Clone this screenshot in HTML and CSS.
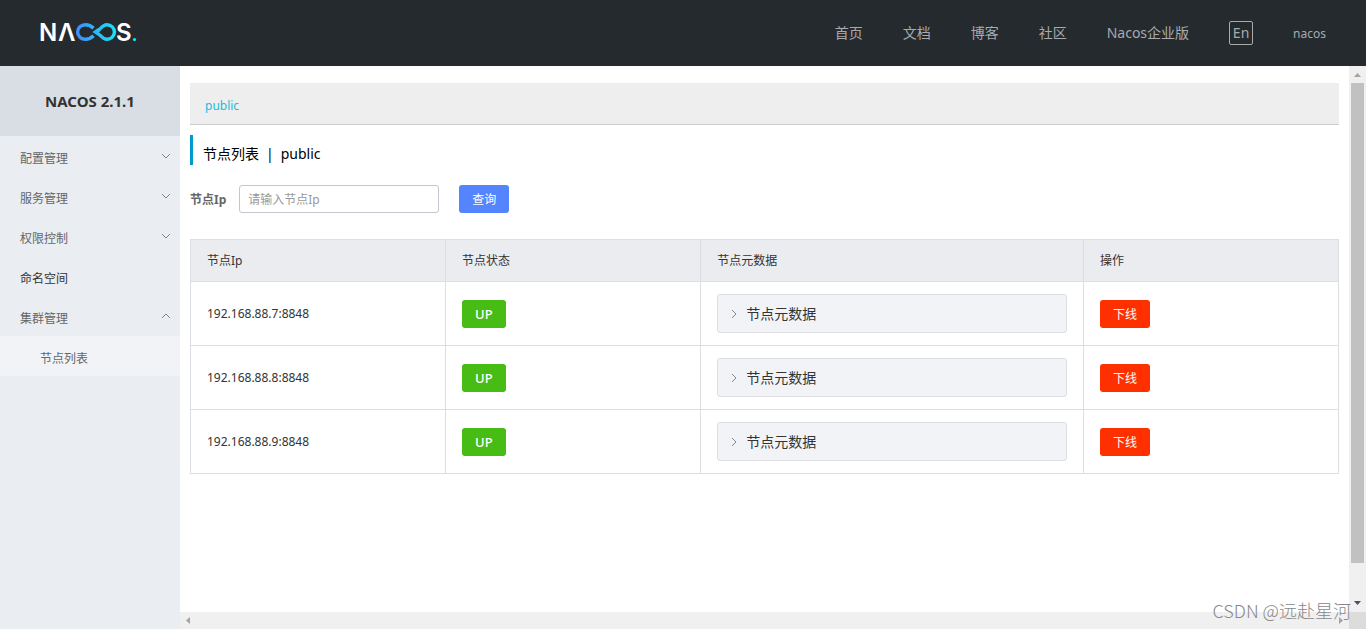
FILE: index.html
```html
<!DOCTYPE html>
<html lang="zh-CN">
<head>
<meta charset="utf-8">
<title>Nacos</title>
<link rel="stylesheet" href="styles.css">
</head>
<body>
<header class="topbar">
  <a class="logo" href="#" aria-label="Nacos">
    <svg width="100" height="36" viewBox="0 -5 100 36">
      <defs>
        <linearGradient id="loop" gradientUnits="userSpaceOnUse" x1="36" y1="0" x2="76" y2="0">
          <stop offset="0" stop-color="#418bfb"/>
          <stop offset="1" stop-color="#17e6f5"/>
        </linearGradient>
      </defs>
      <text class="logo-letter" x="-1" y="21">N</text>
      <text class="logo-letter" x="18" y="21">Λ</text>
      <path d="M53.5 8.2C51 5.6 48.500 4.700 45.500 4.700C41 4.700 37.600 8 37.600 12S41 19.300 45.500 19.300C48.500 19.300 51 18.400 53.500 15.800M57 12L60 8.800C62.300 6.200 64 4.700 67 4.700C71.200 4.700 74.400 8 74.400 12S71.200 19.300 67 19.300C64 19.300 62.300 17.800 60 15.200L55.300 12L59 9.300" fill="none" stroke="url(#loop)" stroke-width="3.400"/>
      <text class="logo-letter" x="76" y="21">S</text>
      <circle cx="94.500" cy="19.500" r="1.600" fill="#17e6f5"/>
    </svg>
  </a>
  <nav class="topnav">
    <a href="#">首页</a>
    <a href="#">文档</a>
    <a href="#">博客</a>
    <a href="#">社区</a>
    <a href="#">Nacos企业版</a>
    <button class="lang" type="button">En</button>
    <a class="user" href="#">nacos</a>
  </nav>
</header>
<div class="layout">
  <aside class="sidebar">
    <h1 class="version">NACOS 2.1.1</h1>
    <nav class="menu">
      <button class="menu-item" type="button">配置管理<svg class="chevron" viewBox="0 0 8 8"><path d="M0 2l4 4 4-4"/></svg></button>
      <button class="menu-item" type="button">服务管理<svg class="chevron" viewBox="0 0 8 8"><path d="M0 2l4 4 4-4"/></svg></button>
      <button class="menu-item" type="button">权限控制<svg class="chevron" viewBox="0 0 8 8"><path d="M0 2l4 4 4-4"/></svg></button>
      <a class="menu-item menu-link" href="#">命名空间</a>
      <button class="menu-item" type="button">集群管理<svg class="chevron" viewBox="0 0 8 8"><path d="M0 6l4-4 4 4"/></svg></button>
      <a class="menu-item menu-sub" href="#">节点列表</a>
    </nav>
  </aside>
  <main class="content">
    <div class="namespaces"><a href="#">public</a></div>
    <h2 class="title"><span>节点列表</span><span>|</span><span>public</span></h2>
    <form class="search">
      <label for="ip">节点Ip</label>
      <input id="ip" type="text" placeholder="请输入节点Ip">
      <button class="btn btn-primary" type="button">查询</button>
    </form>
    <table class="nodes">
      <colgroup><col class="col-side"><col class="col-side"><col class="col-meta"><col class="col-side"></colgroup>
      <thead>
        <tr><th>节点Ip</th><th>节点状态</th><th>节点元数据</th><th>操作</th></tr>
      </thead>
      <tbody>
        <tr>
          <td>192.168.88.7:8848</td>
          <td><span class="tag">UP</span></td>
          <td><button class="panel" type="button"><svg class="chevron" viewBox="0 0 8 8"><path d="M2 0l4 4-4 4"/></svg>节点元数据</button></td>
          <td><button class="btn btn-danger" type="button">下线</button></td>
        </tr>
        <tr>
          <td>192.168.88.8:8848</td>
          <td><span class="tag">UP</span></td>
          <td><button class="panel" type="button"><svg class="chevron" viewBox="0 0 8 8"><path d="M2 0l4 4-4 4"/></svg>节点元数据</button></td>
          <td><button class="btn btn-danger" type="button">下线</button></td>
        </tr>
        <tr>
          <td>192.168.88.9:8848</td>
          <td><span class="tag">UP</span></td>
          <td><button class="panel" type="button"><svg class="chevron" viewBox="0 0 8 8"><path d="M2 0l4 4-4 4"/></svg>节点元数据</button></td>
          <td><button class="btn btn-danger" type="button">下线</button></td>
        </tr>
      </tbody>
    </table>
  </main>
  <div class="vbar">
    <svg class="arrow" viewBox="0 0 7 4"><path d="M0 4h7L3.500 0z" fill="#a3a3a3"/></svg>
    <div class="thumb"></div>
    <svg class="arrow" viewBox="0 0 7 4"><path d="M0 0h7L3.500 4z" fill="#505050"/></svg>
  </div>
  <div class="hbar">
    <svg class="arrow-side" viewBox="0 0 4 7"><path d="M4 0v7L0 3.500z" fill="#a3a3a3"/></svg>
    <svg class="arrow-side" viewBox="0 0 4 7"><path d="M0 0v7l4-3.500z" fill="#a3a3a3"/></svg>
  </div>
  <div class="corner"></div>
</div>
<div class="watermark">CSDN @远赴星河</div>
</body>
</html>
```
FILE: styles.css
```css
* {
  box-sizing: border-box;
}

body {
  margin: 0;
  height: 100vh;
  display: flex;
  flex-direction: column;
  overflow: hidden;
  background: #fff;
  color: #333;
  font: 12px/18px "Noto Sans", "Noto Sans CJK SC", sans-serif;
}

a {
  color: inherit;
  text-decoration: none;
}

button,
input {
  margin: 0;
  font: inherit;
}

.topbar {
  display: flex;
  flex: none;
  align-items: center;
  justify-content: space-between;
  height: 66px;
  padding: 0 40px;
  background: #252a2f;
}

.logo svg {
  display: block;
  overflow: visible;
}

.logo-letter {
  fill: #fff;
  font: 600 24px Inter, sans-serif;
}

.topnav {
  display: flex;
  align-items: center;
  gap: 40px;
  color: #a8aaac;
  font-size: 14px;
}

.lang {
  width: 24px;
  height: 24px;
  padding: 0;
  border: 1px solid #a8aaac;
  border-radius: 2px;
  background: none;
  color: inherit;
  line-height: 20px;
}

.user {
  padding-top: 2px;
  font-size: 12px;
}

.layout {
  display: grid;
  flex: 1;
  grid-template: minmax(0, 1fr) 17px / 180px minmax(0, 1fr) 17px;
  min-height: 0;
}

.sidebar {
  grid-row: 1 / 3;
  background: #eaedf1;
}

.version {
  margin: 0;
  background: #d9dde4;
  font-size: 15px;
  font-weight: 700;
  line-height: 70px;
  text-align: center;
}

.menu {
  display: flex;
  flex-direction: column;
}

.menu-item {
  display: flex;
  align-items: flex-start;
  justify-content: space-between;
  height: 40px;
  padding: 14px 10px 8px 20px;
  border: 0;
  background: none;
  color: #666;
}

.menu-link {
  color: #333;
}

.menu-sub {
  padding-left: 40px;
  background: #f2f3f7;
}

.chevron {
  width: 8px;
  height: 8px;
  overflow: visible;
  fill: none;
  stroke: #888;
}

.menu-item .chevron {
  margin-top: 2px;
}

.content {
  padding: 17px 10px;
}

.namespaces {
  padding: 14px 15px 9px;
  border-bottom: 1px solid #ccc;
  background: #eee;
  color: #1dbbdb;
}

.title {
  display: flex;
  gap: 7px;
  margin: 10px 0 20px;
  padding: 8px 0 0 10px;
  border-left: 3px solid #09c;
  color: #000;
  font-size: 14px;
  font-weight: 400;
  line-height: 22px;
}

.search {
  display: flex;
  align-items: center;
  margin-bottom: 26px;
}

.search label {
  padding-top: 2px;
  margin-right: 13px;
  color: #666;
  font-weight: 700;
}

.search input {
  width: 200px;
  height: 28px;
  margin-right: 20px;
  padding: 0 8px;
  border: 1px solid #c4c6cf;
  border-radius: 3px;
}

.search input::placeholder {
  color: #999;
}

.btn,
.tag {
  display: block;
  width: max-content;
  padding: 6px 13px 4px;
  border: 0;
  border-radius: 3px;
  color: #fff;
}

.btn-primary {
  background: #5584ff;
}

.btn-danger {
  background: #ff3000;
}

.tag {
  padding: 5px 13px;
  background: #46bc15;
  font-size: 13px;
  font-weight: 500;
}

.nodes {
  width: 100%;
  border-collapse: collapse;
  table-layout: fixed;
}

.col-side {
  width: 22.22%;
}

.nodes th,
.nodes td {
  padding: 12px 16px;
  border: 1px solid #dcdee3;
  font-weight: 400;
  text-align: left;
}

.nodes th {
  padding-bottom: 11px;
  background: #ebecf0;
}

.panel {
  display: flex;
  align-items: center;
  gap: 8px;
  width: 100%;
  padding: 10px 12px 9px;
  border: 1px solid #dcdee3;
  border-radius: 3px;
  background: #f2f3f7;
  color: #333;
  font-size: 14px;
}

.vbar,
.hbar {
  display: flex;
  align-items: center;
  justify-content: space-between;
  background: #f0f0f0;
}

.vbar {
  flex-direction: column;
  padding: 7px 0;
}

.thumb {
  flex: 1;
  width: 13px;
  margin: 6px 0 38px;
  background: #c1c1c1;
}

.hbar {
  padding: 0 6px;
}

.arrow {
  width: 7px;
  height: 4px;
}

.arrow-side {
  width: 4px;
  height: 7px;
}

.corner {
  background: #dcdcdc;
}

.watermark {
  position: absolute;
  right: 15px;
  bottom: 7px;
  color: #888;
  font: 300 18px/24px "Noto Sans CJK SC", sans-serif;
}
```
